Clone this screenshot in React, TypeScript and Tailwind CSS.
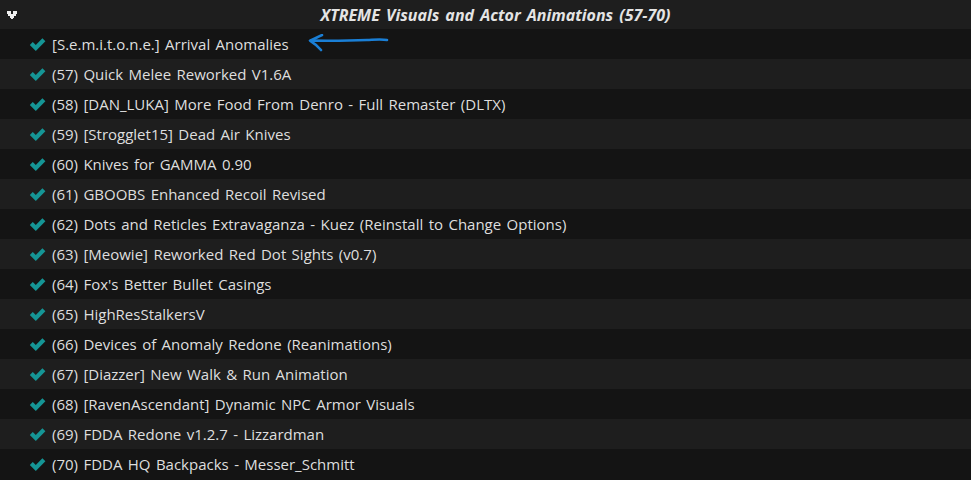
import React from "react";

const rows = [
  "[S.e.m.i.t.o.n.e.] Arrival Anomalies",
  "(57) Quick Melee Reworked V1.6A",
  "(58) [DAN_LUKA] More Food From Denro - Full Remaster (DLTX)",
  "(59) [Strogglet15] Dead Air Knives",
  "(60) Knives for GAMMA 0.90",
  "(61) GBOOBS Enhanced Recoil Revised",
  "(62) Dots and Reticles Extravaganza - Kuez (Reinstall to Change Options)",
  "(63) [Meowie] Reworked Red Dot Sights (v0.7)",
  "(64) Fox's Better Bullet Casings",
  "(65) HighResStalkersV",
  "(66) Devices of Anomaly Redone (Reanimations)",
  "(67) [Diazzer] New Walk & Run Animation",
  "(68) [RavenAscendant] Dynamic NPC Armor Visuals",
  "(69) FDDA Redone v1.2.7 - Lizzardman",
  "(70) FDDA HQ Backpacks - Messer_Schmitt",
];

function Check() {
  return (
    <svg width="17" height="15" viewBox="0 0 17 15" className="shrink-0">
      <path d="M0.8 8 L3.8 5 L6.8 8 L13.4 1.2 L16.4 4.2 L6.8 14 Z" fill="#159595" />
    </svg>
  );
}

function Toggle() {
  return (
    <svg width="10" height="8" viewBox="0 0 10 8" shapeRendering="crispEdges">
      <rect x="0" y="0" width="4" height="3" fill="#f0f0f0" />
      <rect x="6" y="0" width="4" height="3" fill="#f0f0f0" />
      <rect x="1" y="3" width="8" height="2" fill="#f0f0f0" />
      <rect x="3" y="5" width="4" height="2" fill="#f0f0f0" />
      <rect x="4" y="7" width="2" height="1" fill="#f0f0f0" />
    </svg>
  );
}

function Arrow() {
  return (
    <svg width="84" height="20" viewBox="0 0 84 20" className="shrink-0">
      <path
        d="M80 6 C 74 4.8, 68 5.6, 60 6 C 45 6.6, 25 6.8, 4 6.6"
        stroke="#1a7fd6"
        strokeWidth="2.6"
        fill="none"
        strokeLinecap="round"
      />
      <path
        d="M15 1 C 11 3, 7 5, 3 6.6 C 7 9, 10 11.5, 14 16"
        stroke="#1a7fd6"
        strokeWidth="2.6"
        fill="none"
        strokeLinecap="round"
        strokeLinejoin="round"
      />
    </svg>
  );
}

export default function App() {
  return (
    <div
      className="w-[971px] h-[480px] bg-[#141414] overflow-hidden text-[#dedede]"
      style={{ fontFamily: '"Open Sans", "Noto Sans", sans-serif' }}
    >
      <div className="h-[29px] bg-[#1e1e1e] flex items-center">
        <div className="w-[20px] pl-[7px] flex items-center">
          <Toggle />
        </div>
        <div className="flex-1 text-center font-bold italic text-[16px] text-[#e4e4e4] [word-spacing:2px]">
          XTREME Visuals and Actor Animations (57-70)
        </div>
      </div>
      {rows.map((r, i) => (
        <div
          key={i}
          className={`h-[30px] flex items-center pl-[29px] ${i % 2 === 0 ? "bg-[#141414]" : "bg-[#1e1e1e]"}`}
        >
          <Check />
          <span className="ml-[6px] text-[15px] whitespace-nowrap [word-spacing:1.5px]">{r}</span>
          {i === 0 && (
            <span className="ml-[18px] flex">
              <Arrow />
            </span>
          )}
        </div>
      ))}
    </div>
  );
}
